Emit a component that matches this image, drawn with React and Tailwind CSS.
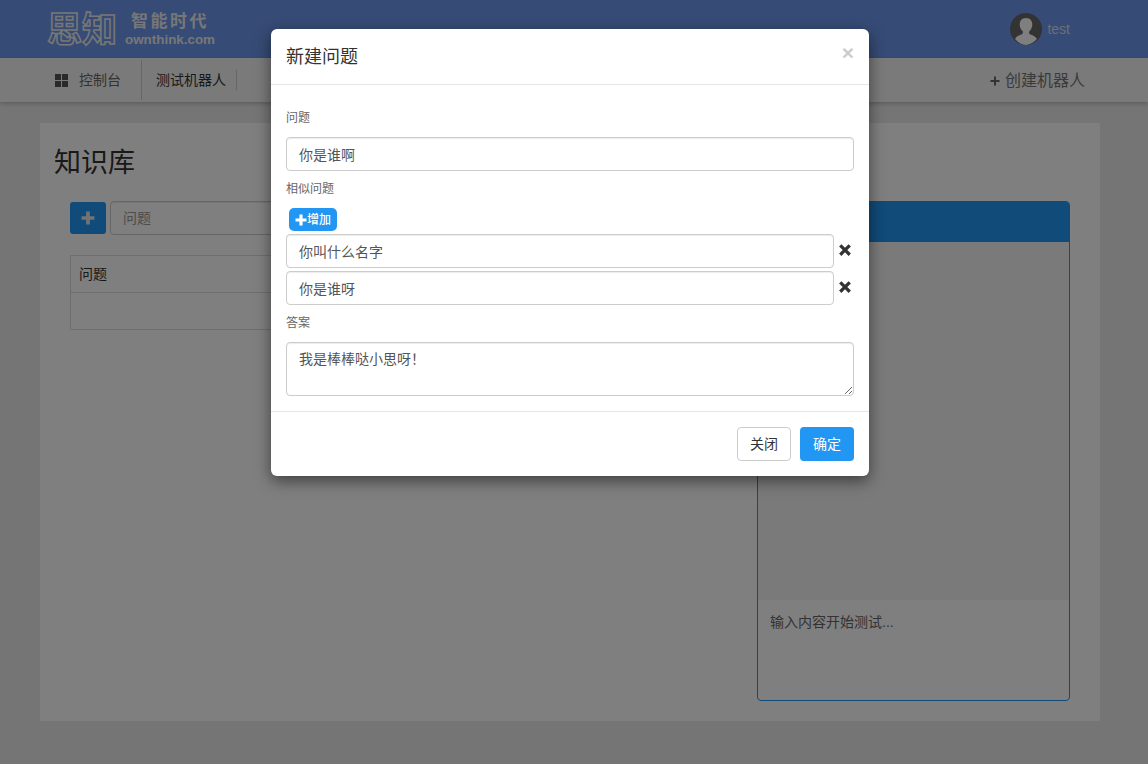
const Plus = ({ className }) => (
  <svg viewBox="0 0 12 12" className={className} fill="currentColor" aria-hidden="true">
    <path d="M4.4 0.5h3.2v3.9h3.9v3.2H7.6v3.9H4.4V7.6H0.5V4.4h3.9z" />
  </svg>
);
const Cross = () => (
  <svg viewBox="0 0 14 14" className="w-[14px] h-[14px] text-[#333] block" fill="currentColor" aria-hidden="true">
    <path d="M3.4 1.2 7 4.8l3.6-3.6 2.3 2.3L9.3 7l3.6 3.6-2.3 2.3L7 9.3l-3.6 3.6-2.3-2.3L4.7 7 1.1 3.5z" />
  </svg>
);
const Field = ({ value, className = "" }) => (
  <div className={`h-[34px] flex items-center px-3 pt-px border border-[#ccc] rounded shadow-[inset_0_1px_1px_rgba(0,0,0,0.075)] text-sm text-[#555] bg-white ${className}`}>{value}</div>
);

export default function App() {
  return (
    <div className="relative h-[764px] w-[1148px] overflow-hidden bg-[#ebebeb] font-['Liberation_Sans','Noto_Sans_CJK_SC',sans-serif] text-[#333]">
      <header className="h-[58px] bg-[#6c96ea] flex items-center pl-[47px] pr-[78px] justify-between">
        <div className="flex items-center text-[#eeeeee]">
          <span className="w-[78px] whitespace-nowrap text-[35px] leading-none font-bold tracking-[0px] text-transparent [-webkit-text-stroke:1.5px_#eeeeee]">思知</span>
          <div className="flex flex-col">
            <span className="text-[17px] leading-[20px] pt-px font-bold tracking-[2.5px] pl-[6px]">智能时代</span>
            <span className="text-[13.4px] leading-[15px] font-bold">ownthink.com</span>
          </div>
        </div>
        <div className="flex items-center gap-[5px]">
          <svg viewBox="0 0 32 32" className="w-8 h-8" aria-hidden="true">
            <circle cx="16" cy="16" r="16" fill="#666" />
            <path d="M16 5c-4 0-6.300 2.800-6.300 6.500 0 3 1.500 5.500 3.200 7 .2 1.500-.3 2.500-1.500 3-2.500 1-5.400 2-6.300 4.500A16 16 0 0 0 16 32a16 16 0 0 0 10.900-5.900c-1-2.600-3.900-3.600-6.400-4.600-1.200-.5-1.600-1.500-1.400-3 1.700-1.500 3.200-4 3.200-7C22.300 7.800 20 5 16 5z" fill="#fff" />
          </svg>
          <span className="text-sm text-[#d5dff0]">test</span>
        </div>
      </header>

      <nav className="h-[44px] bg-[#f5f5f5] flex items-stretch justify-between pl-[55px] pr-[63px] shadow-[0_2px_4px_rgba(0,0,0,0.2)] relative">
        <div className="flex items-center text-sm">
          <svg viewBox="0 0 13 13" className="w-[13px] h-[13px] text-[#555]" fill="currentColor" aria-hidden="true">
            <path d="M0 0h6v6H0zM7 0h6v6H7zM0 7h6v6H0zM7 7h6v6H7z" />
          </svg>
          <span className="ml-[11px] text-[#666]">控制台</span>
          <span className="ml-5 h-10 w-px bg-[#ccc]" />
          <span className="ml-[14px] text-[#333]">测试机器人</span>
          <span className="ml-[10px] h-5 w-px bg-[#ccc]" />
        </div>
        <div className="flex items-center text-base text-[#777] pt-[2px]">
          <svg viewBox="0 0 10 10" className="w-[10px] h-[10px] mr-[5px] text-[#666]" fill="none" stroke="currentColor" strokeWidth="2" aria-hidden="true">
            <path d="M5 0.500v9M0.500 5h9" />
          </svg>
          <span>创建机器人</span>
        </div>
      </nav>

      <main className="ml-10 w-[1060px] mt-[21px] h-[598px] bg-white">
        <h1 className="h-[78px] pl-[14px] pt-[20px] text-[27px] leading-[40px] font-normal">知识库</h1>
        <div className="flex gap-5 px-[30px] h-[500px]">
          <section className="flex-1">
            <div className="flex items-center gap-1 h-[34px]">
              <button className="w-9 h-8 rounded-[3px] bg-[#2196f3] text-white flex items-center justify-center">
                <Plus className="w-[14px] h-[14px] text-[#e6e6e6]" />
              </button>
              <Field value={<span className="text-[#999] -mt-[2px]">问题</span>} className="flex-1" />
            </div>
            <div className="mt-5 border border-[#ddd] text-sm">
              <div className="h-[37px] flex items-center px-2 border-b border-[#ddd]">问题</div>
              <div className="h-[36px]" />
            </div>
          </section>
          <aside className="w-[313px] h-[500px] border border-[#2196f3] rounded flex flex-col overflow-hidden">
            <div className="h-[40px] bg-[#2196f3] shrink-0" />
            <div className="flex-1 bg-[#f5f5f5]" />
            <div className="h-[100px] shrink-0 px-3 py-3 text-sm text-[#666] leading-5">输入内容开始测试...</div>
          </aside>
        </div>
      </main>

      <div className="absolute inset-0 bg-black/50">
        <div className="ml-[271px] mt-[29px] w-[598px] h-[447px] bg-white rounded-md shadow-[0_5px_15px_rgba(0,0,0,0.5)] flex flex-col">
          <div className="h-[56px] border-b border-[#e5e5e5] px-[15px] flex items-center justify-between shrink-0">
            <h2 className="text-lg font-normal text-[#333]">新建问题</h2>
            <span className="text-[21px] font-bold text-[#ccc] leading-none -mt-[9px]">×</span>
          </div>
          <div className="flex-1 px-[15px] flex flex-col">
            <label className="mt-[24px] h-[18px] leading-[18px] text-xs text-[#666]">问题</label>
            <Field value="你是谁啊" className="mt-[10px]" />
            <label className="mt-[9px] h-[18px] leading-[18px] text-xs text-[#666]">相似问题</label>
            <button className="ml-[3px] mt-[10px] w-12 h-[23px] rounded-[5px] bg-[#2196f3] text-white text-xs font-medium flex items-center justify-center shrink-0">
              <Plus className="w-3 h-3" />增加
            </button>
            <div className="mt-[3px] flex items-center gap-[4px]">
              <Field value="你叫什么名字" className="flex-1" />
              <span className="w-4 -mt-[2px]"><Cross /></span>
            </div>
            <div className="mt-[3px] flex items-center gap-[4px]">
              <Field value="你是谁呀" className="flex-1" />
              <span className="w-4 -mt-[2px]"><Cross /></span>
            </div>
            <label className="mt-[9px] h-[18px] leading-[18px] text-xs text-[#666]">答案</label>
            <textarea readOnly defaultValue="我是棒棒哒小思呀！" className="mt-[10px] h-[54px] w-full px-3 py-[6px] border border-[#ccc] rounded shadow-[inset_0_1px_1px_rgba(0,0,0,0.075)] text-sm leading-5 text-[#555] outline-none" />
          </div>
          <div className="h-[65px] border-t border-[#e5e5e5] px-[15px] flex items-center justify-end gap-[9px] shrink-0">
            <button className="w-[54px] h-[34px] border border-[#ccc] rounded text-sm text-[#333] bg-white">关闭</button>
            <button className="w-[54px] h-[34px] rounded bg-[#2196f3] text-sm text-white">确定</button>
          </div>
        </div>
      </div>
    </div>
  );
}
